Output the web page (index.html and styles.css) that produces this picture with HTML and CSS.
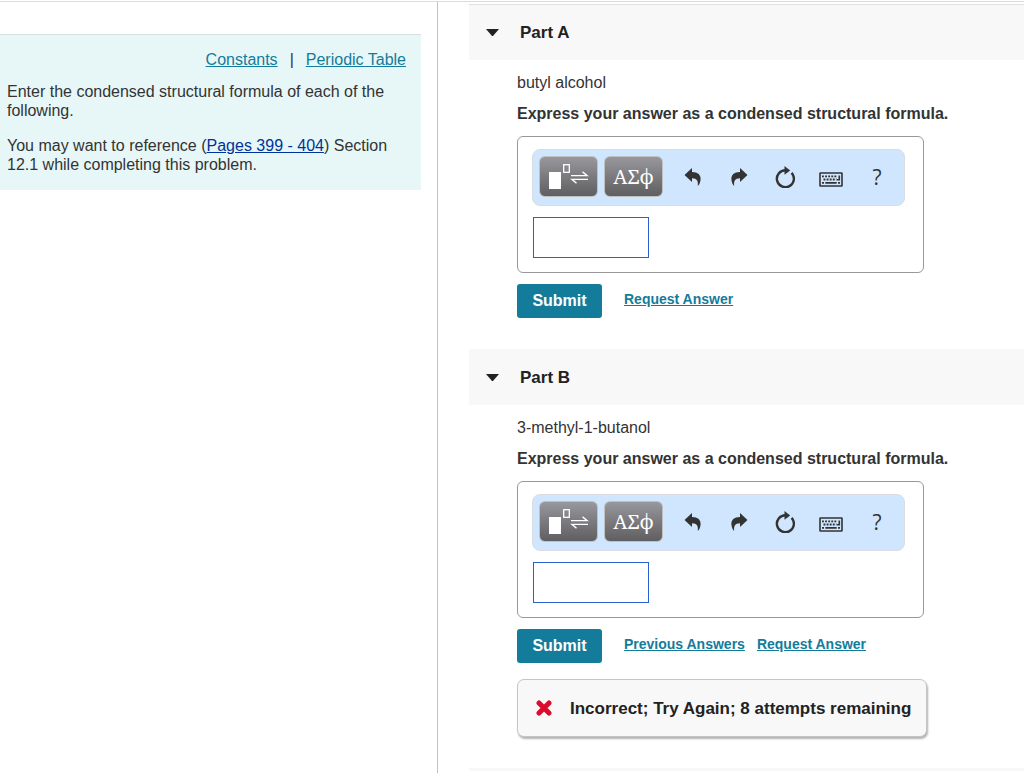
FILE: index.html
```html
<!DOCTYPE html>
<html lang="en">
<head>
    <meta charset="UTF-8">
    <meta name="viewport" content="width=device-width, initial-scale=1.0">
    <title>Condensed structural formulas</title>
    <link rel="stylesheet" href="styles.css">
</head>
<body>
    <!-- shared toolbar icons -->
    <svg class="sprite" aria-hidden="true">
        <symbol id="icon-template" viewBox="0 0 42 26">
            <rect x="1" y="8" width="12" height="17" fill="#fff"/>
            <rect x="15.7" y="0.7" width="5.6" height="7.6" fill="none" stroke="#fff" stroke-width="1.3"/>
            <path d="M23 11.6H39L34.5 7.8M40 15.4H24L28.5 19.2" fill="none" stroke="#fff" stroke-width="1.4"/>
        </symbol>
        <symbol id="icon-undo" viewBox="0 0 18 18">
            <path d="M0.5 7L8 0V4C14 4 17 7 16.6 11.5C16.4 14 15.4 16.5 13.8 18C14.3 13 13.2 10.2 8 10.2V14Z"/>
        </symbol>
        <symbol id="icon-redo" viewBox="0 0 18 18">
            <path d="M17.5 7L10 0V4C4 4 1 7 1.4 11.5C1.6 14 2.6 16.5 4.2 18C3.7 13 4.8 10.2 10 10.2V14Z"/>
        </symbol>
        <symbol id="icon-reset" viewBox="0 0 20 22">
            <path d="M10.5 4.2A8.5 8.5 0 1 0 16.6 6.9" fill="none" stroke="#333" stroke-width="2.4"/>
            <path d="M9.5 0L15.2 4.4L9.5 8.8Z"/>
        </symbol>
        <symbol id="icon-keyboard" viewBox="0 0 24 15">
            <rect x="1" y="1" width="22" height="13" rx="0.5" fill="none" stroke="#333" stroke-width="1.6"/>
            <path d="M3 4.3H18M4.5 7.5H17.5" fill="none" stroke="#333" stroke-width="1.8" stroke-dasharray="1.9 1.2"/>
            <path d="M3 10.9H5M6.3 10.9H17.7M19 10.9H21" fill="none" stroke="#333" stroke-width="1.7"/>
            <path d="M18 7.7H20.3V3.4" fill="none" stroke="#333" stroke-width="1.6"/>
        </symbol>
        <symbol id="icon-wrong" viewBox="0 0 16 16">
            <path d="M3 3L13 13M13 3L3 13" fill="none" stroke="#dd0b2b" stroke-width="5" stroke-linecap="round"/>
        </symbol>
    </svg>

    <div class="page">
        <aside class="sidebar">
            <div class="intro">
                <nav class="resources">
                    <a href="#constants">Constants</a>
                    <span class="divider">|</span>
                    <a href="#periodic-table">Periodic Table</a>
                </nav>
                <p>Enter the condensed structural formula of each of the following.</p>
                <p>You may want to reference (<a class="pages" href="#pages">Pages 399 - 404</a>) Section 12.1 while completing this problem.</p>
            </div>
        </aside>

        <main class="parts">
            <section class="part">
                <h2 class="part-header"><span class="arrow"></span>Part A</h2>
                <div class="part-body">
                    <p class="compound">butyl alcohol</p>
                    <label class="instruction" for="answerA">Express your answer as a condensed structural formula.</label>
                    <div class="editor">
                        <div class="toolbar">
                            <button type="button" class="key" aria-label="Templates"><svg class="template"><use href="#icon-template"/></svg></button>
                            <button type="button" class="key">ΑΣϕ</button>
                            <button type="button" class="tool first" aria-label="Undo"><svg class="icon"><use href="#icon-undo"/></svg></button>
                            <button type="button" class="tool" aria-label="Redo"><svg class="icon"><use href="#icon-redo"/></svg></button>
                            <button type="button" class="tool" aria-label="Reset"><svg class="icon reset"><use href="#icon-reset"/></svg></button>
                            <button type="button" class="tool" aria-label="Keyboard shortcuts"><svg class="icon keyboard"><use href="#icon-keyboard"/></svg></button>
                            <button type="button" class="tool">?</button>
                        </div>
                        <input type="text" class="answer" id="answerA">
                    </div>
                    <div class="actions">
                        <button type="submit" class="submit">Submit</button>
                        <a href="#request-a">Request Answer</a>
                    </div>
                </div>
            </section>

            <section class="part">
                <h2 class="part-header"><span class="arrow"></span>Part B</h2>
                <div class="part-body">
                    <p class="compound">3-methyl-1-butanol</p>
                    <label class="instruction" for="answerB">Express your answer as a condensed structural formula.</label>
                    <div class="editor">
                        <div class="toolbar">
                            <button type="button" class="key" aria-label="Templates"><svg class="template"><use href="#icon-template"/></svg></button>
                            <button type="button" class="key">ΑΣϕ</button>
                            <button type="button" class="tool first" aria-label="Undo"><svg class="icon"><use href="#icon-undo"/></svg></button>
                            <button type="button" class="tool" aria-label="Redo"><svg class="icon"><use href="#icon-redo"/></svg></button>
                            <button type="button" class="tool" aria-label="Reset"><svg class="icon reset"><use href="#icon-reset"/></svg></button>
                            <button type="button" class="tool" aria-label="Keyboard shortcuts"><svg class="icon keyboard"><use href="#icon-keyboard"/></svg></button>
                            <button type="button" class="tool">?</button>
                        </div>
                        <input type="text" class="answer" id="answerB">
                    </div>
                    <div class="actions">
                        <button type="submit" class="submit">Submit</button>
                        <a href="#previous-b">Previous Answers</a>
                        <a href="#request-b">Request Answer</a>
                    </div>
                    <div class="feedback">
                        <svg class="wrong"><use href="#icon-wrong"/></svg>
                        <span>Incorrect; Try Again; 8 attempts remaining</span>
                    </div>
                </div>
            </section>
            <div class="next-part"></div>
        </main>
    </div>
</body>
</html>
```
FILE: styles.css
```css
* {
    box-sizing: border-box;
}
body {
    margin: 0;
    padding-top: 1px;
    background-color: #fff;
    color: #333;
    font-family: "Liberation Sans", Arial, sans-serif;
    font-size: 16px;
    line-height: 19px;
}
p, h2 {
    margin: 0;
}
a {
    color: #147c9b;
}
button {
    border: 0;
    padding: 0;
    font-family: inherit;
    cursor: pointer;
}
.sprite {
    display: none;
}
.page {
    display: flex;
    min-height: calc(100vh - 1px);
    border-top: 1px solid #dcdcdc;
}

/* left column */
.sidebar {
    width: 438px;
    flex-shrink: 0;
    padding: 32px 16px 0 0;
    border-right: 1px solid #b9c3cf;
}
.intro {
    padding: 15px 15px 16px 7px;
    border-top: 1px solid #d8dddd;
    background-color: #e7f7f8;
}
.resources {
    display: flex;
    justify-content: flex-end;
    gap: 12px;
    margin-bottom: 13px;
}
.intro p + p {
    margin-top: 16px;
}
.intro .pages {
    color: #003399;
}

/* right column */
.parts {
    flex: 1;
    padding: 2px 0 0 31px;
}
.part-header {
    display: flex;
    align-items: center;
    height: 56px;
    padding-left: 17px;
    background-color: #f8f8f8;
    color: #222;
    font-size: 17px;
}
.part:first-child .part-header {
    border-top: 1px solid #e0e0e0;
}
.arrow {
    width: 13px;
    margin-right: 21px;
    border: 6px solid transparent;
    border-top: 7px solid #222;
    border-bottom: 0;
}
.part-body {
    padding: 13px 16px 31px 48px;
}
.compound {
    margin-bottom: 12px;
}
.instruction {
    display: block;
    font-weight: bold;
}
.editor {
    max-width: 407px;
    height: 137px;
    margin-top: 13px;
    padding: 12px 18px 0 14px;
    border: 1px solid #999;
    border-radius: 6px;
}
.toolbar {
    display: flex;
    align-items: center;
    height: 57px;
    padding: 0 4px 2px 6px;
    border: 1px solid #d9dde2;
    border-radius: 8px;
    background-color: #d0e6fe;
}
.key {
    display: flex;
    align-items: center;
    justify-content: center;
    width: 59px;
    height: 41px;
    margin-right: 6px;
    border: 1px solid #c0c0c0;
    border-radius: 6px;
    background: linear-gradient(#97979d, #5f5f61);
    color: #fff;
    font-family: "Noto Serif", "Liberation Serif", serif;
    font-size: 20px;
}
.template {
    width: 42px;
    height: 26px;
}
.tool {
    display: flex;
    align-items: center;
    justify-content: center;
    width: 46px;
    height: 41px;
    background: none;
    color: #333;
    font-family: "Open Sans", sans-serif;
    font-size: 21px;
}
.tool.first {
    margin-left: 1px;
}
.icon {
    width: 18px;
    height: 18px;
    fill: #333;
}
.reset {
    width: 20px;
    height: 22px;
}
.keyboard {
    width: 24px;
    height: 15px;
    margin-top: 6px;
}
.answer {
    display: block;
    width: 116px;
    height: 41px;
    margin: 11px 0 0 1px;
    padding: 4px 8px;
    border: 1px solid #2a5fd0;
    font-size: 16px;
}
.actions {
    display: flex;
    align-items: center;
    gap: 12px;
    margin-top: 11px;
    font-size: 14px;
    font-weight: bold;
}
.actions a {
    padding-bottom: 3px;
}
.submit {
    width: 85px;
    height: 34px;
    margin-right: 10px;
    border-radius: 3px;
    background-color: #147c9b;
    color: #fff;
    font-size: 16px;
    font-weight: bold;
}
.feedback {
    display: flex;
    align-items: center;
    gap: 18px;
    max-width: 410px;
    height: 58px;
    margin-top: 16px;
    padding-left: 18px;
    border: 1px solid #c4c4c4;
    border-radius: 7px;
    background-color: #f8f8f8;
    box-shadow: 1px 2px 2px rgba(0, 0, 0, 0.3);
    color: #222;
    font-size: 17px;
    font-weight: bold;
}
.wrong {
    width: 16px;
    height: 16px;
}
.next-part {
    height: 3px;
    background-color: #f8f8f8;
}
```
